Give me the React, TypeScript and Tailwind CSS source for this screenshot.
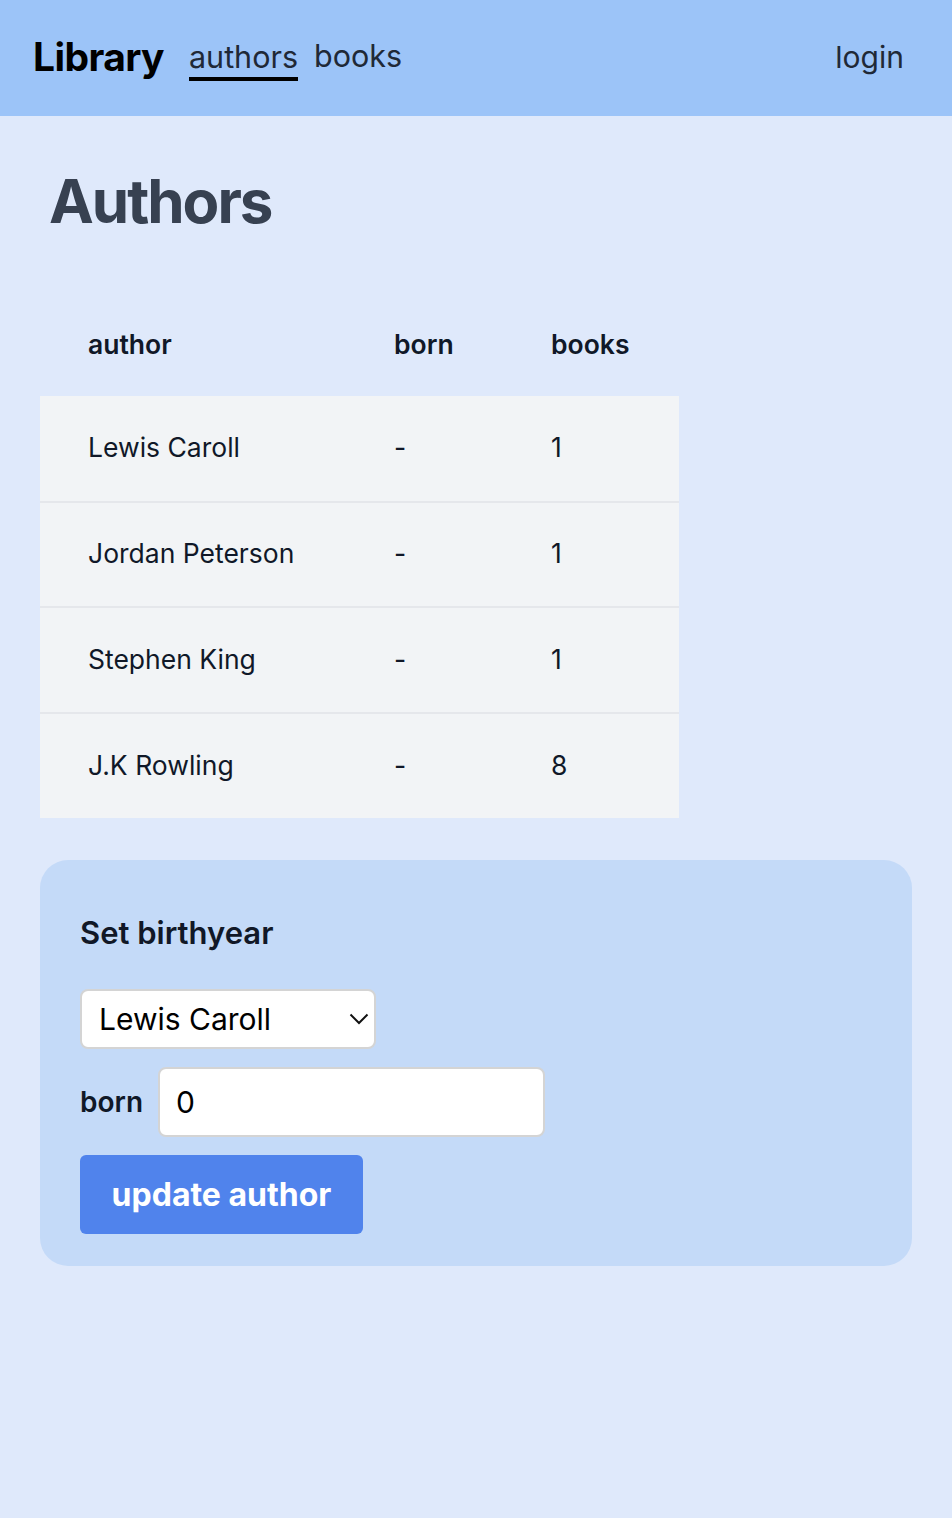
import React from 'react';

const authors = [
  { name: 'Lewis Caroll', born: '-', books: 1 },
  { name: 'Jordan Peterson', born: '-', books: 1 },
  { name: 'Stephen King', born: '-', books: 1 },
  { name: 'J.K Rowling', born: '-', books: 8 },
];

export default function App() {
  return (
    <div className="min-h-[1518px] bg-[#dfe9fb] font-['Inter',sans-serif] text-gray-900">
      <nav className="flex h-[116px] items-center justify-between bg-[#9cc4f8] pl-[33px] pr-[48px]">
        <div className="flex items-center">
          <span className="mr-[25px] -mt-[2px] text-[39px] font-bold tracking-[-0.6px] text-black">Library</span>
          <a className="mr-[16px] border-b-4 border-black pb-[0px] text-[30.5px] leading-[40px] text-[#1f2937] mt-[2px]">
            authors
          </a>
          <a className="text-[30.5px] leading-[40px] text-[#1f2937] -mt-[4px]">books</a>
        </div>
        <a className="-mt-[2px] text-[30px] text-[#1f2937]">login</a>
      </nav>

      <main className="px-[40px]">
        <h1 className="pl-[9px] pt-[49px] text-[60px] font-bold leading-[72px] tracking-[-2px] text-[#374151]">
          Authors
        </h1>

        <table className="mt-[53px] border-collapse text-[26.5px]">
          <thead>
            <tr className="h-[106px]">
              <th className="w-[306px] px-[48px] pt-[3px] text-left font-semibold">author</th>
              <th className="w-[157px] px-[48px] pt-[3px] text-left font-semibold">born</th>
              <th className="w-[176px] px-[48px] pt-[3px] text-left font-semibold">books</th>
            </tr>
          </thead>
          <tbody>
            {authors.map((a, i) => (
              <tr
                key={a.name}
                className={`h-[105.5px] bg-[#f2f4f6] ${i > 0 ? 'border-t-2 border-[#e5e7eb]' : ''}`}
              >
                <td className="px-[48px]">{a.name}</td>
                <td className="px-[48px]">{a.born}</td>
                <td className="px-[48px]">{a.books}</td>
              </tr>
            ))}
          </tbody>
        </table>

        <section className="mt-[42px] rounded-[28px] bg-[#c4daf8] px-[40px] pt-[53px] pb-[32px]">
          <h2 className="text-[31px] font-semibold leading-[40px] text-[#111827]">Set birthyear</h2>
          <div className="mt-[36px] flex h-[60px] w-[296px] items-center justify-between rounded-[8px] border-2 border-[#d4d4d4] bg-white pl-[17px] pr-[5px]">
            <span className="text-[30px] text-black">Lewis Caroll</span>
            <svg width="20" height="12" viewBox="0 0 20 12" fill="none">
              <path d="M1.5 1.5l8.5 8.5 8.5-8.5" stroke="#111" strokeWidth="2" />
            </svg>
          </div>
          <div className="mt-[18px] flex items-center">
            <label className="mr-[15px] text-[28px] font-semibold">born</label>
            <div className="flex h-[70px] w-[387px] items-center rounded-[8px] border-2 border-[#d4d4d4] bg-white pl-[16px]">
              <span className="text-[30px] text-black">0</span>
            </div>
          </div>
          <button className="mt-[18px] h-[79px] w-[283px] rounded-[6px] bg-[#5083ec] text-[32px] font-bold text-white">
            update author
          </button>
        </section>
      </main>
    </div>
  );
}
